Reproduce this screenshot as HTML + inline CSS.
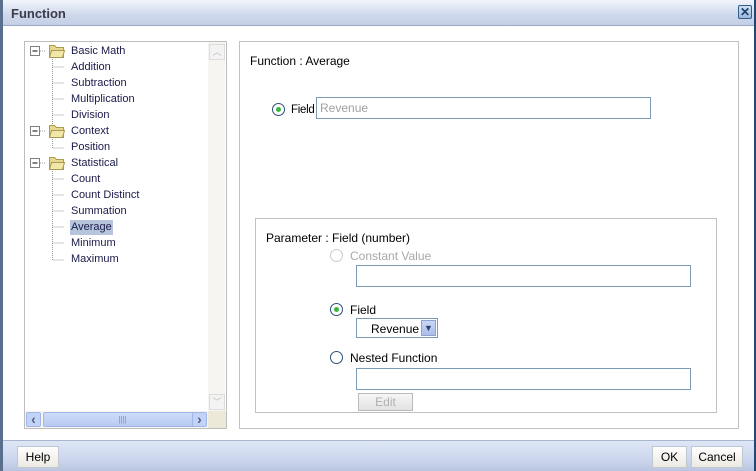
<!DOCTYPE html>
<html><head><meta charset="utf-8"><style>
*{margin:0;padding:0;box-sizing:border-box}
body{width:756px;height:471px;overflow:hidden;background:#fff;font-family:"Liberation Sans",Arial,sans-serif;font-size:11px;color:#000;position:relative}
.a{position:absolute}
.title{left:0;top:0;width:756px;height:26px;background:linear-gradient(#f1f4fa,#cfd9ec 60%,#c4cfe6);border-bottom:1px solid #9aa8c8}
.title span{position:absolute;left:11px;top:6px;font-size:13px;font-weight:bold;color:#3b3b4a}
.lb{left:0;top:0;width:3px;height:471px;background:#5a6f8c}
.rb{right:0;top:0;width:2px;height:471px;background:#1f4a78}
.close{left:738px;top:5px;width:14px;height:14px;border:1px solid #355d8a;background:linear-gradient(#cfe0f2,#9cb8da);border-radius:2px;color:#1c3e6b;font-size:12px;line-height:12px;text-align:center;font-weight:bold}
.foot{left:3px;top:440px;width:751px;height:31px;background:linear-gradient(#dfe7f6,#c9d4ec 70%,#b9c5df);border-top:1px solid #a9b6d0}
.btn{height:22px;border:1px solid #c2c8d0;background:linear-gradient(#fff,#ece9e2);font-size:12px;text-align:center;line-height:20px}
.tree{left:24px;top:41px;width:203px;height:388px;border:1px solid #bdbdbd}
.row{position:absolute;left:71px;font-size:11px;color:#1a1a4a;height:15px;line-height:15px}
.panel{left:239px;top:41px;width:500px;height:388px;border:1px solid #c0c0c0}
.inp{border:1px solid #7b9ab5;background:#fff}
.radio{width:13px;height:13px;border:1px solid #2f4f7a;border-radius:50%;background:#fff}
.radio.on:after{content:"";position:absolute;left:3px;top:3px;width:5px;height:5px;border-radius:50%;background:#3db43d}
.t12{font-size:12px}
</style></head><body>
<div class="a title"><span>Function</span></div>
<div class="a close">✕</div>
<div class="a lb"></div><div class="a rb"></div>

<div class="a tree">
  <div class="a" style="left:183px;top:0;width:17px;height:370px;background:#f6f5f1"></div>
  <div class="a" style="left:184px;top:2px;width:16px;height:16px;border:1px solid #dcdcdc;background:#f3f3f3;color:#bbb;text-align:center;font-size:9px;line-height:14px">︿</div>
  <div class="a" style="left:184px;top:352px;width:16px;height:16px;border:1px solid #dcdcdc;background:#f3f3f3;color:#bbb;text-align:center;font-size:9px;line-height:14px">﹀</div>
  <div class="a" style="left:0;top:369px;width:183px;height:17px;background:#f6f5f1"></div>
  <div class="a" style="left:1px;top:370px;width:15px;height:15px;background:#c2d3f6;border:1px solid #a0b6e6;border-radius:2px;color:#4d6185;font-weight:bold;font-size:14px;text-align:center;line-height:12px">‹</div>
  <div class="a" style="left:18px;top:370px;width:159px;height:15px;background:linear-gradient(#cfdcf8,#b7caf3);border:1px solid #a0b6e6;border-radius:2px;color:#7a8fc0;text-align:center;font-size:8px;line-height:13px">||||</div>
  <div class="a" style="left:167px;top:370px;width:15px;height:15px;background:#c2d3f6;border:1px solid #a0b6e6;border-radius:2px;color:#4d6185;font-weight:bold;font-size:14px;text-align:center;line-height:12px">›</div>
  <div class="a" style="left:183px;top:369px;width:18px;height:17px;background:#ede9d8"></div>
</div>
<svg class="a" style="left:24px;top:41px" width="185" height="230">
 <g stroke="#999" stroke-dasharray="1,1" fill="none">
  <path d="M28.5 18V107H40M28.5 26H40M28.5 42H40M28.5 58H40M28.5 74H40"/>
  <path d="M28.5 98V107H40"/>
  <path d="M28.5 130V219H40M28.5 138H40M28.5 154H40M28.5 170H40M28.5 186H40M28.5 202H40"/>
  <path d="M16 10H22M16 90H22M16 122H22"/>
 </g>
 <g>
  <rect x="6.5" y="5.5" width="9" height="9" fill="#fff" stroke="#808080"/><path d="M8.5 10H13.5" stroke="#000"/>
  <rect x="6.5" y="85.5" width="9" height="9" fill="#fff" stroke="#808080"/><path d="M8.5 90H13.5" stroke="#000"/>
  <rect x="6.5" y="117.5" width="9" height="9" fill="#fff" stroke="#808080"/><path d="M8.5 122H13.5" stroke="#000"/>
 </g>
 <g fill="#e8d88e" stroke="#a89a55">
  <path d="M25.5 4.5h5l2 2h7v10h-14z"/><path d="M25.5 16.5l2-7h13l-2 7z" fill="#f3e7a8"/>
  <path d="M25.5 84.5h5l2 2h7v10h-14z"/><path d="M25.5 96.5l2-7h13l-2 7z" fill="#f3e7a8"/>
  <path d="M25.5 116.5h5l2 2h7v10h-14z"/><path d="M25.5 128.5l2-7h13l-2 7z" fill="#f3e7a8"/>
 </g>
</svg>
<div class="row" style="top:44px">Basic Math</div>
<div class="row" style="top:60px">Addition</div>
<div class="row" style="top:76px">Subtraction</div>
<div class="row" style="top:92px">Multiplication</div>
<div class="row" style="top:108px">Division</div>
<div class="row" style="top:124px">Context</div>
<div class="row" style="top:140px">Position</div>
<div class="row" style="top:156px">Statistical</div>
<div class="row" style="top:172px">Count</div>
<div class="row" style="top:188px">Count Distinct</div>
<div class="row" style="top:204px">Summation</div>
<div class="row" style="top:220px;background:#b6c4dc;padding:0 1px;left:70px">Average</div>
<div class="row" style="top:236px">Minimum</div>
<div class="row" style="top:252px">Maximum</div>

<div class="a panel"></div>
<div class="a t12" style="left:250px;top:54px">Function : Average</div>
<div class="a radio on" style="left:272px;top:103px"></div>
<div class="a" style="left:291px;top:104px;font-size:11.5px;letter-spacing:-0.3px">Field</div>
<div class="a inp" style="left:316px;top:97px;width:335px;height:22px;color:#a0a0a0;font-size:12px;line-height:21px;padding-left:3px">Revenue</div>

<div class="a" style="left:255px;top:218px;width:462px;height:195px;border:1px solid #c0c0c0"></div>
<div class="a t12" style="left:266px;top:231px">Parameter : Field (number)</div>
<div class="a radio" style="left:330px;top:249px;border-color:#ccc"></div>
<div class="a t12" style="left:350px;top:249px;color:#a8a8a8">Constant Value</div>
<div class="a inp" style="left:356px;top:265px;width:335px;height:22px"></div>
<div class="a radio on" style="left:330px;top:303px"></div>
<div class="a t12" style="left:350px;top:303px">Field</div>
<div class="a" style="left:356px;top:318px;width:82px;height:20px;border:1px solid #7b9ab5;background:#fff"><span class="a t12" style="left:14px;top:3px">Revenue</span><span class="a" style="left:64px;top:1px;width:15px;height:16px;background:linear-gradient(#c9d6f5,#a8bdea);border:1px solid #8ba2d4;color:#2a3f70;font-size:9px;text-align:center;line-height:14px">▼</span></div>
<div class="a radio" style="left:330px;top:351px"></div>
<div class="a t12" style="left:350px;top:351px">Nested Function</div>
<div class="a inp" style="left:356px;top:368px;width:335px;height:22px"></div>
<div class="a btn" style="left:358px;top:393px;width:55px;height:18px;line-height:16px;color:#b0b0b0;border-color:#bbb;background:linear-gradient(#f6f6f6,#e2e2e2)">Edit</div>

<div class="a foot"></div>
<div class="a btn" style="left:17px;top:446px;width:42px">Help</div>
<div class="a btn" style="left:652px;top:446px;width:35px">OK</div>
<div class="a btn" style="left:691px;top:446px;width:52px">Cancel</div>
</body></html>
